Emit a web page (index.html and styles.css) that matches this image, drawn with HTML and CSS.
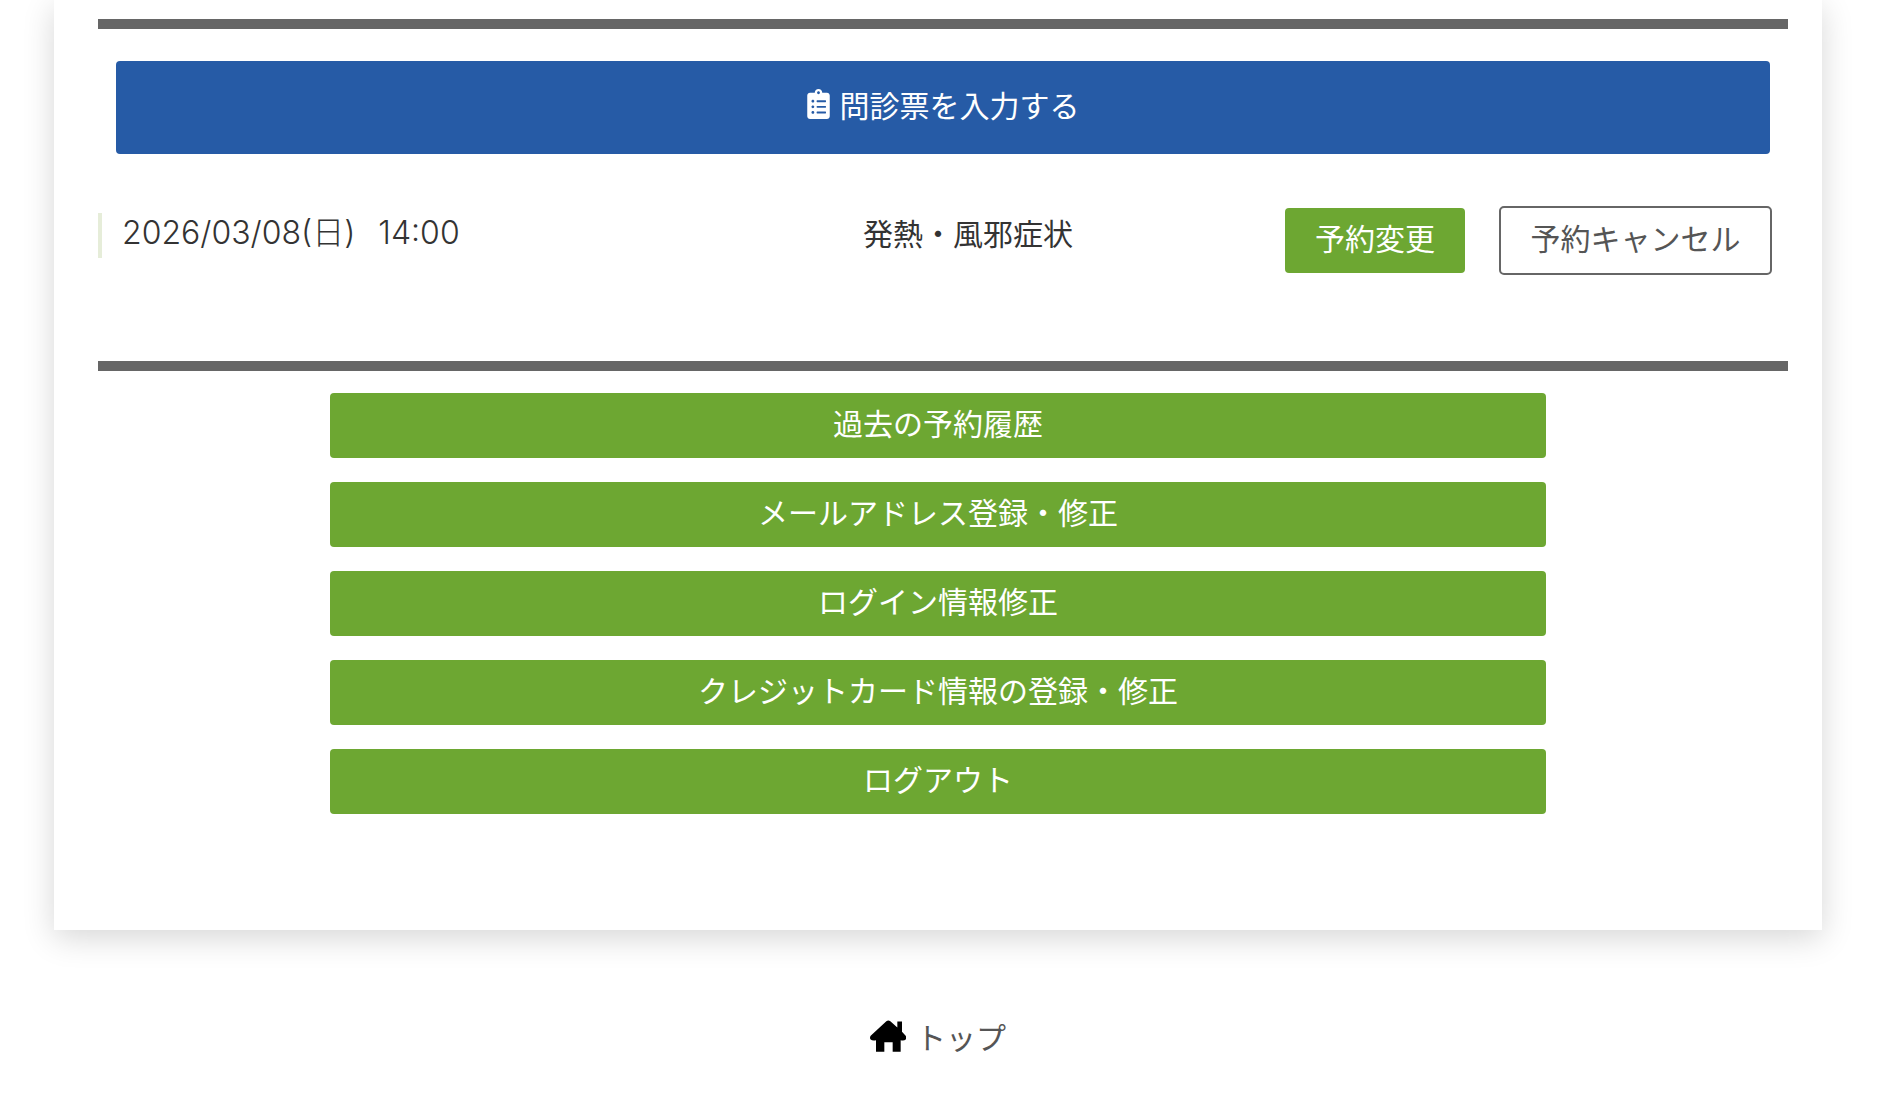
FILE: index.html
```html
<!DOCTYPE html>
<html lang="ja">
<head>
<meta charset="utf-8">
<title>マイページ</title>
<link rel="stylesheet" href="styles.css">
</head>
<body>
<main class="card">
  <hr class="rule rule-top">
  <a class="btn-blue" href="#">
    <svg class="icon-clip" viewBox="0 0 384 512" aria-hidden="true"><path fill="currentColor" d="M336 64h-80c0-35.3-28.7-64-64-64s-64 28.7-64 64H48C21.5 64 0 85.5 0 112v352c0 26.5 21.5 48 48 48h288c26.5 0 48-21.5 48-48V112c0-26.5-21.5-48-48-48zM96 424c-13.3 0-24-10.7-24-24s10.7-24 24-24 24 10.7 24 24-10.7 24-24 24zm0-96c-13.3 0-24-10.7-24-24s10.7-24 24-24 24 10.7 24 24-10.7 24-24 24zm0-96c-13.3 0-24-10.7-24-24s10.7-24 24-24 24 10.7 24 24-10.7 24-24 24zm96-192c13.3 0 24 10.7 24 24s-10.7 24-24 24-24-10.7-24-24 10.7-24 24-24zm128 368c0 4.4-3.6 8-8 8H168c-4.4 0-8-3.6-8-8v-16c0-4.4 3.6-8 8-8h144c4.4 0 8 3.6 8 8v16zm0-96c0 4.4-3.6 8-8 8H168c-4.4 0-8-3.6-8-8v-16c0-4.4 3.6-8 8-8h144c4.4 0 8 3.6 8 8v16zm0-96c0 4.4-3.6 8-8 8H168c-4.4 0-8-3.6-8-8v-16c0-4.4 3.6-8 8-8h144c4.4 0 8 3.6 8 8v16z"/></svg>
    <span>問診票を入力する</span>
  </a>
  <section class="booking">
    <div class="booking-date"><span>2026/03/08(日)</span><span>14:00</span></div>
    <div class="booking-type">発熱・風邪症状</div>
    <a class="btn-change" href="#">予約変更</a>
    <a class="btn-cancel" href="#">予約キャンセル</a>
  </section>
  <hr class="rule">
  <nav class="menu">
    <a class="menu-item" href="#">過去の予約履歴</a>
    <a class="menu-item" href="#">メールアドレス登録・修正</a>
    <a class="menu-item" href="#">ログイン情報修正</a>
    <a class="menu-item" href="#">クレジットカード情報の登録・修正</a>
    <a class="menu-item" href="#">ログアウト</a>
  </nav>
</main>
<footer class="foot">
  <a class="top-link" href="#">
    <svg class="icon-home" viewBox="0 0 108 95" aria-hidden="true"><path fill="currentColor" d="M49 3 Q55 -1 61 3 L82 22 V4 H96 V35 L107 47 Q111 53 107 58 Q103 62 92 60 V95 H68 V66 H43 V95 H18 V60 Q7 62 2 58 Q-2 53 2 47 Z"/></svg>
    <span>トップ</span>
  </a>
</footer>
</body>
</html>
```
FILE: styles.css
```css
* { box-sizing: border-box; }
html, body { margin: 0; height: 1104px; overflow: hidden; background: #fff; }
body {
  font-family: "Noto Sans CJK JP", "Noto Sans", sans-serif;
  font-size: 30px;
  color: #333;
}
a { text-decoration: none; }

.card {
  width: 1768px;
  height: 930px;
  margin-left: 54px;
  padding: 19px 34px 0 44px;
  background: #fff;
  box-shadow: 0 8px 30px rgba(0, 0, 0, .16);
}
.rule {
  height: 10px;
  margin: 0;
  border: 0;
  background: #666;
}
.btn-blue {
  display: flex;
  align-items: center;
  justify-content: center;
  gap: 10px;
  height: 93px;
  margin: 32px 18px 0;
  padding-bottom: 7px;
  border-radius: 4px;
  background: #265ba6;
  color: #fff;
  line-height: 1;
}
.icon-clip { width: 23px; height: 30px; }

.booking {
  display: flex;
  align-items: flex-start;
  height: 207px;
  padding-top: 52px;
}
.booking-date {
  display: flex;
  gap: 23px;
  width: 765px;
  height: 45px;
  margin-top: 7px;
  padding-left: 20px;
  border-left: 4px solid #e6edd9;
  font-family: Inter, "Noto Sans CJK JP", sans-serif;
  font-size: 32px;
  font-weight: 300;
  line-height: 40px;
}
.booking-type {
  width: 422px;
  margin-top: 6px;
  line-height: 40px;
}
.btn-change, .btn-cancel {
  display: flex;
  align-items: center;
  justify-content: center;
  padding-bottom: 7px;
  border-radius: 4px;
}
.btn-change {
  width: 180px;
  height: 65px;
  margin-top: 2px;
  background: #6da732;
  color: #fff;
}
.btn-cancel {
  width: 273px;
  height: 69px;
  margin-left: 34px;
  border: 2px solid #666;
  border-radius: 5px;
  color: #555;
}

.menu {
  display: flex;
  flex-direction: column;
  gap: 24px;
  width: 1216px;
  margin: 22px 0 0 232px;
}
.menu-item {
  display: flex;
  align-items: center;
  justify-content: center;
  height: 65px;
  padding-bottom: 7px;
  border-radius: 4px;
  background: #6da732;
  color: #fff;
}

.foot {
  display: flex;
  justify-content: center;
  padding-top: 84px;
}
.top-link {
  display: flex;
  align-items: center;
  gap: 10px;
  margin-left: -4px;
  color: #555;
}
.icon-home { width: 36px; height: 32px; color: #000; }
```
